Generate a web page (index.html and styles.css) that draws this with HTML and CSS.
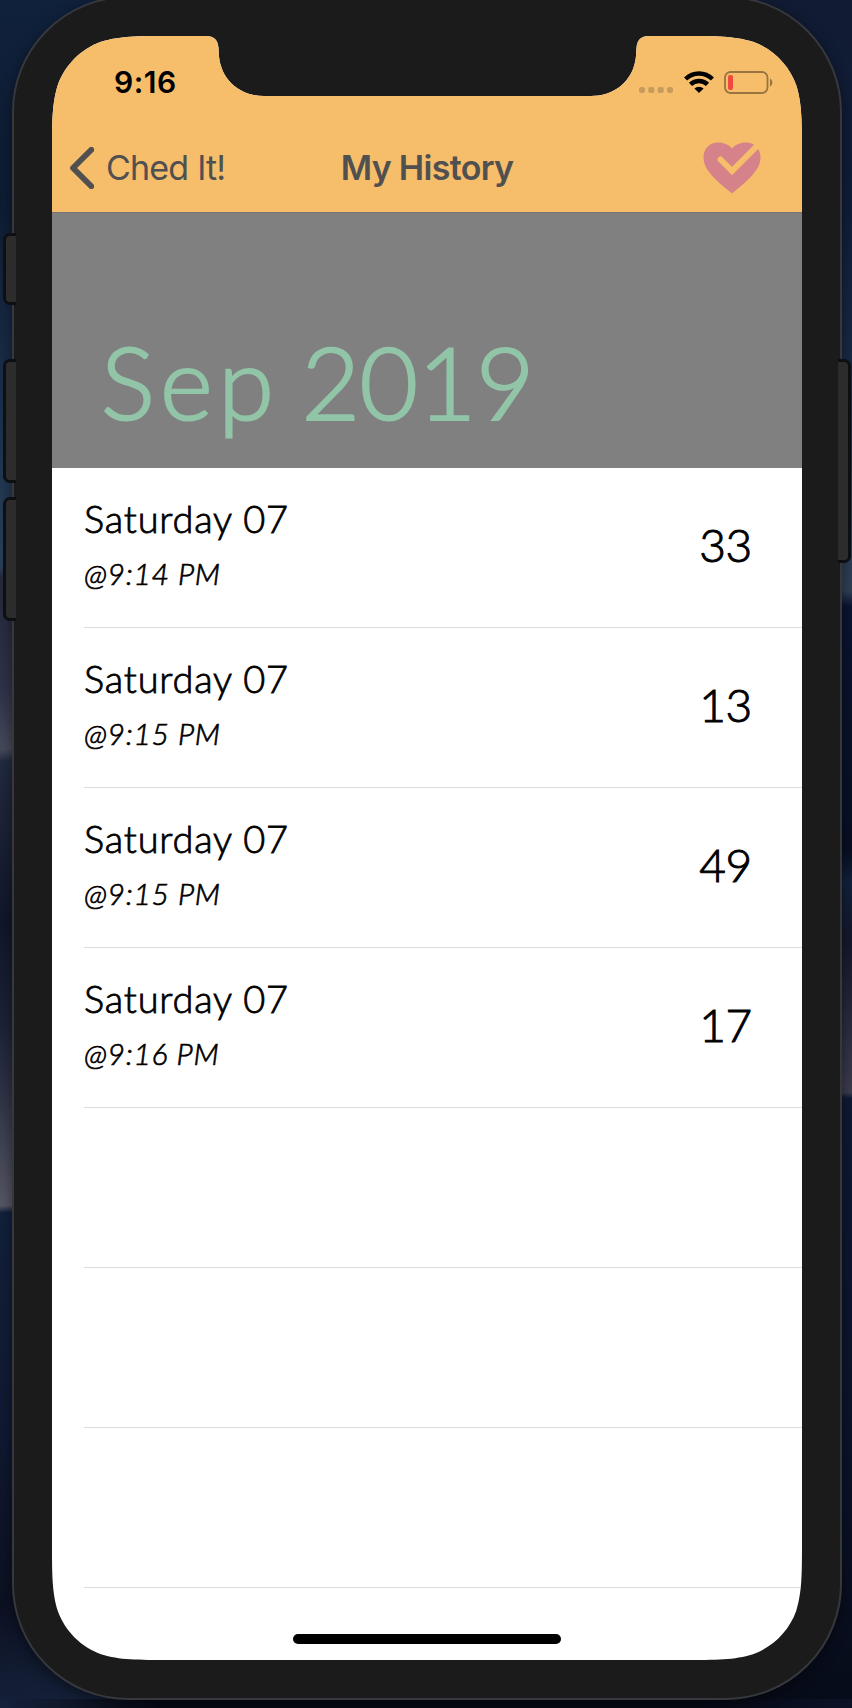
FILE: index.html
```
<!DOCTYPE html>
<html lang="en">
<head>
<meta charset="utf-8">
<title>My History</title>
<link rel="stylesheet" href="styles.css">
</head>
<body>
<div class="desktop">
  <div class="phone">
    <i class="key key-mute"></i>
    <i class="key key-up"></i>
    <i class="key key-down"></i>
    <i class="key key-power"></i>
    <div class="screen">
      <header class="top">
        <div class="status">
          <span class="clock">9:16</span>
          <div class="indicators">
            <svg class="cell" width="34" height="6" viewBox="0 0 34 6"><g fill="#c79b5b"><rect width="6" height="6" rx="2"/><rect x="9.3" width="6" height="6" rx="2"/><rect x="18.7" width="6" height="6" rx="2"/><rect x="28" width="6" height="6" rx="2"/></g></svg>
            <svg class="wifi" width="30" height="22" viewBox="0 0 30 22"><g fill="none" stroke="#000" stroke-width="4.500"><path d="M1.600 8a19.300 19.300 0 0 1 26.800 0"/><path d="M6.500 13.400a12.300 12.300 0 0 1 17 0"/></g><path d="M15 22l-4.600-4.500a6.600 6.600 0 0 1 9.200 0z"/></svg>
            <svg class="battery" width="49" height="23" viewBox="0 0 49 23"><rect x="1" y="1" width="42.5" height="21" rx="5.5" fill="none" stroke="#98743f" stroke-width="1.8"/><rect x="4" y="4" width="5" height="15" rx="2" fill="#f04a40"/><path d="M46 7.500c3 1.200 3 6.800 0 8z" fill="#98743f"/></svg>
          </div>
        </div>
        <nav class="nav">
          <a class="back"><svg width="26" height="42" viewBox="0 0 26 42"><path d="M23.300 2.800L5 21l18.300 18.200" fill="none" stroke="#505050" stroke-width="5.800" stroke-linecap="round" stroke-linejoin="round"/></svg><span>Ched It!</span></a>
          <h1>My History</h1>
          <svg class="heart" width="58" height="52" viewBox="0 0 58 52"><path d="M29 51.500C18 42 .5 30 .5 15.500C.5 6.500 7 .5 15 .5C21 .5 26 3 29 6.500C32 3 37 .5 43 .5C51 .5 57.500 6.500 57.500 15.500C57.500 30 40 42 29 51.500z" fill="#d6828a"/><path d="M17.500 17.500L29 29L56 2" fill="none" stroke="#f6bd6a" stroke-width="6" stroke-linecap="round"/></svg>
        </nav>
      </header>
      <section class="month"><h2><span class="mon">Sep</span> <span class="year">2019</span></h2></section>
      <ul class="list">
        <li><div><p class="day">Saturday 07</p><p class="time">@9:14 PM</p></div><b>33</b></li>
        <li><div><p class="day">Saturday 07</p><p class="time">@9:15 PM</p></div><b>13</b></li>
        <li><div><p class="day">Saturday 07</p><p class="time">@9:15 PM</p></div><b>49</b></li>
        <li><div><p class="day">Saturday 07</p><p class="time">@9:16 PM</p></div><b>17</b></li>
        <li></li>
        <li></li>
        <li></li>
      </ul>
      <i class="home"></i>
    </div>
  </div>
</div>
</body>
</html>
```
FILE: styles.css
```
* { box-sizing: border-box; margin: 0; padding: 0; }
body { width: 852px; height: 1708px; overflow: hidden; }
.desktop {
  width: 852px; height: 1708px; overflow: hidden; padding-left: 12px;
  background:
    linear-gradient(90deg, #15213a 0, #060914 160px, #060914 700px, #0b1226 852px) 0 100% / 100% 9px no-repeat,
    linear-gradient(176deg, #10213c 0, #0e1c32 200px, #1b2f4b 400px, #2a3f58 566px, #25283a 576px, #30334a 690px, #474a5b 748px, #222a3f 760px, #10172a 920px, #1c2236 1020px, #2e3245 1090px, #565765 1203px, #12203a 1210px, #111a34 1400px, #0c1122 1600px, #15213a 1708px) 0 0 / 426px 100% no-repeat,
    linear-gradient(184deg, #111b33 0, #101d38 200px, #1b2c48 400px, #303f55 590px, #0b1430 605px, #080f22 850px, #12213b 880px, #15182b 940px, #3c3c4e 1090px, #0f1933 1096px, #0c142c 1400px, #080d1c 1660px, #060b18 1708px) 426px 0 / 426px 100% no-repeat;
}
.phone {
  position: relative; width: 830px; height: 1704px; margin-top: -4px; padding: 38px 38px 0;
  background: #1b1b1b; border: 2px solid #36383d; border-radius: 116px;
  box-shadow: 0 4px 14px rgba(0, 0, 0, .45);
}
.key { position: absolute; background: #2c2c2c; border: 3px solid #0d0f13; }
.key-mute, .key-up, .key-down { left: -11px; width: 13px; border-right: 0; border-radius: 7px 0 0 7px; }
.key-mute { top: 235px; height: 72px; }
.key-up { top: 361px; height: 124px; }
.key-down { top: 499px; height: 124px; }
.key-power { left: 824px; top: 361px; width: 13px; height: 204px; border-left: 0; border-radius: 0 7px 7px 0; }
.screen {
  position: relative; width: 750px; height: 1624px; background: #fff;
  font-family: Lato, sans-serif; color: #000;
  clip-path: path("M0 119C0 85 0 68 5.800 49C13 29 29 13 49 5.800C68 0 85 0 119 0H154C162 0 166 4 166.500 12C167 20 167 24 169 30C174 47 190 60 212 60H539C561 60 577 47 582 30C584 24 584 20 584.500 12C585 4 589 0 597 0H631C665 0 682 0 701 5.800C721 13 737 29 744.200 49C750 68 750 85 750 119V1505C750 1539 750 1556 744.200 1575C737 1595 721 1611 701 1618.200C682 1624 665 1624 631 1624H119C85 1624 68 1624 49 1618.200C29 1611 13 1595 5.800 1575C0 1556 0 1539 0 1505Z");
}
.top { height: 176px; background: #f6bd6a; font-family: Inter, sans-serif; }
.status { display: flex; justify-content: space-between; height: 88px; padding: 35px 29px 0 62px; }
.clock { font-size: 30px; line-height: 22px; font-weight: 600; letter-spacing: .5px; }
.indicators { display: flex; align-items: flex-start; }
.cell { margin: 16px 11px 0 0; }
.wifi { margin-right: 10px; }
.nav { display: grid; grid-template-columns: 1fr auto 1fr; align-items: center; height: 88px; padding: 0 16px; color: #505050; }
.back { display: flex; align-items: center; gap: 12px; font-size: 34px; line-height: 40px; letter-spacing: -.8px; }
.nav h1 { font-size: 34px; line-height: 40px; font-weight: 600; letter-spacing: -.7px; }
.heart { justify-self: end; margin-right: 25px; }
.month { height: 256px; padding: 108px 0 0 49px; background: #808080; border-top: 1px solid #77736c; }
.month h2 { display: flex; gap: 22px; font-size: 101px; line-height: 120px; font-weight: 300; color: #92c5a8; -webkit-text-stroke: 2.200px #92c5a8; }
.mon { letter-spacing: 5.500px; }
.year { letter-spacing: -.4px; }
.list { list-style: none; }
.list li { display: flex; justify-content: space-between; height: 160px; margin-left: 32px; padding-right: 50px; border-bottom: 1px solid #dcdcdd; }
.day { margin-top: 27px; font-size: 38px; line-height: 46px; font-weight: 300; letter-spacing: .8px; -webkit-text-stroke: .8px #000; }
.time { margin-top: 14px; font-size: 30px; line-height: 36px; font-weight: 300; font-style: italic; letter-spacing: .7px; -webkit-text-stroke: .7px #000; }
.list b { margin-top: 49px; font-size: 46px; line-height: 56px; font-weight: 300; letter-spacing: -.3px; -webkit-text-stroke: 1px #000; }
.home { position: absolute; left: 241px; top: 1598px; width: 268px; height: 10px; border-radius: 5px; background: #000; }
```
